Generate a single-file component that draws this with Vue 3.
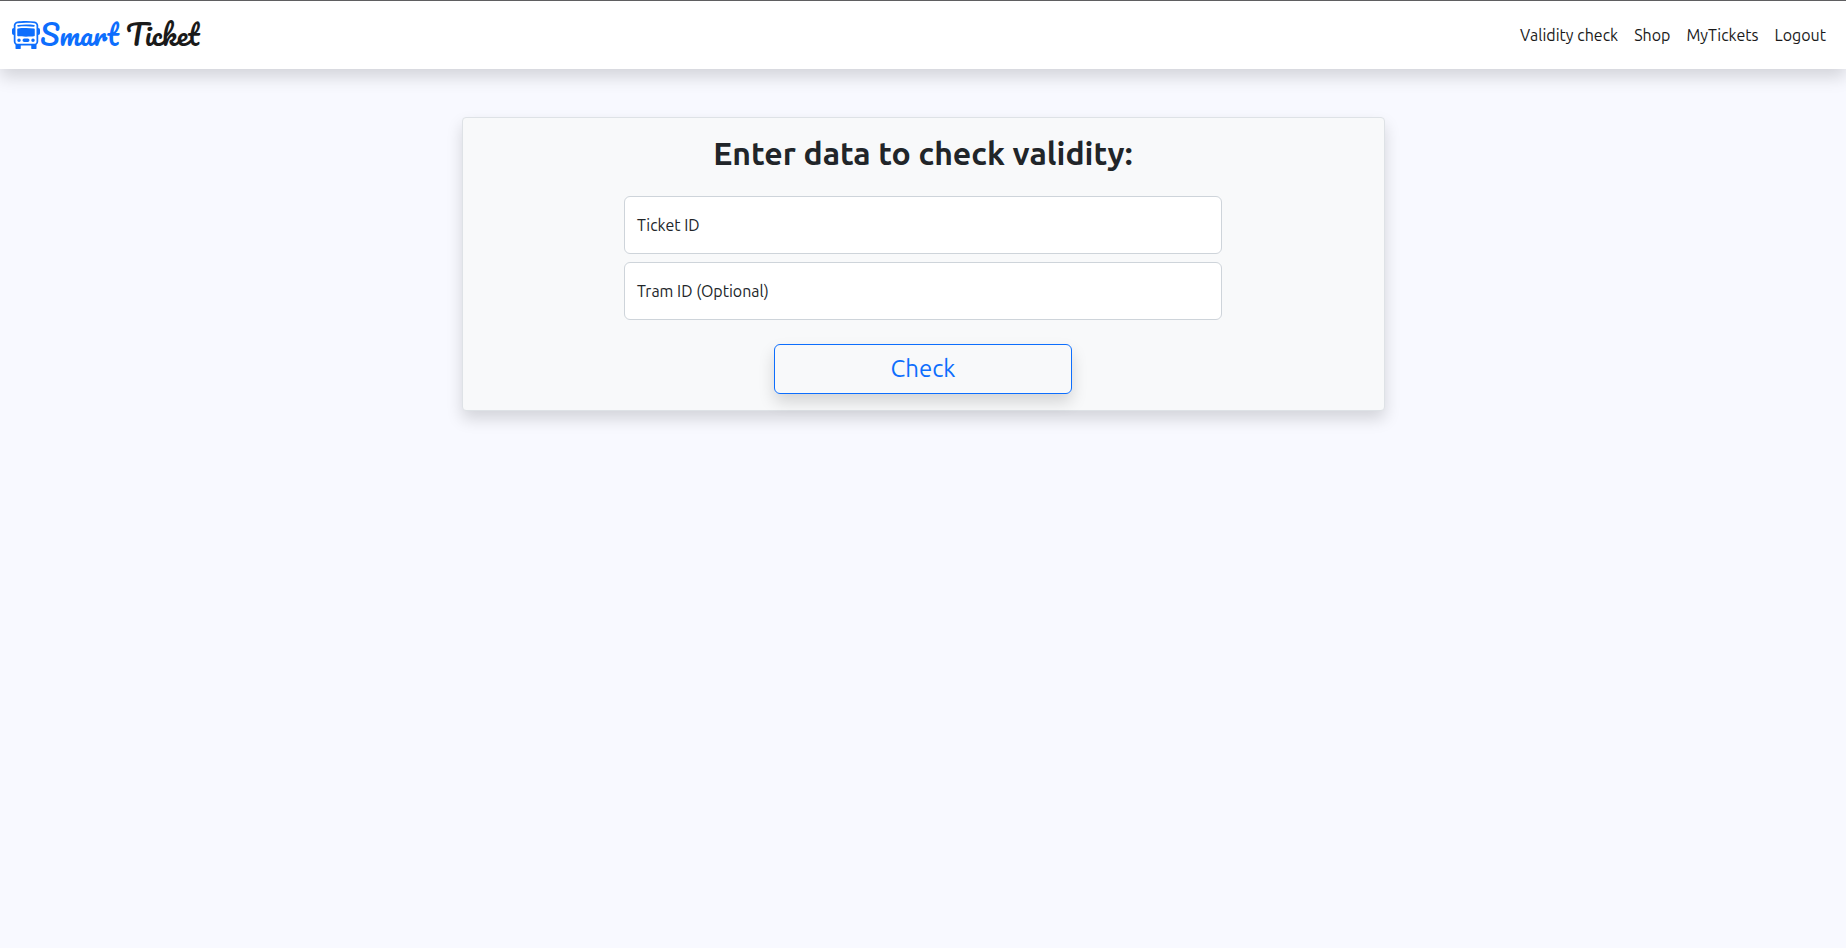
<script setup>
import { ref } from 'vue'

const links = ['Validity check', 'Shop', 'MyTickets', 'Logout']
const ticketId = ref('')
const tramId = ref('')
</script>

<template>
  <header class="navbar">
    <a class="brand" href="#">
      <svg class="brand-icon" viewBox="0 0 16 16" fill="currentColor" aria-hidden="true">
        <path d="M5 11a1 1 0 1 1-2 0 1 1 0 0 1 2 0m8 0a1 1 0 1 1-2 0 1 1 0 0 1 2 0m-6-1a1 1 0 1 0 0 2h2a1 1 0 1 0 0-2zm1-6c-1.876 0-3.426.109-4.552.226A.5.5 0 0 0 3 4.723v3.554a.5.5 0 0 0 .448.497C4.574 8.891 6.124 9 8 9s3.426-.109 4.552-.226A.5.5 0 0 0 13 8.277V4.723a.5.5 0 0 0-.448-.497A44 44 0 0 0 8 4m0-1c-1.837 0-3.353.107-4.448.22a.5.5 0 1 1-.104-.994A44 44 0 0 1 8 2c1.876 0 3.426.109 4.552.226a.5.5 0 1 1-.104.994A43 43 0 0 0 8 3" />
        <path d="M15 8a1 1 0 0 0 1-1V5a1 1 0 0 0-1-1V2.64c0-1.188-.845-2.232-2.064-2.372A44 44 0 0 0 8 0C5.9 0 4.208.136 3.064.268 1.845.408 1 1.452 1 2.64V4a1 1 0 0 0-1 1v2a1 1 0 0 0 1 1v3.5c0 .818.393 1.544 1 2v2a.5.5 0 0 0 .5.5h2a.5.5 0 0 0 .5-.5V14h6v1.5a.5.5 0 0 0 .5.5h2a.5.5 0 0 0 .5-.5v-2c.607-.456 1-1.182 1-2zM8 1c2.056 0 3.71.134 4.822.261.676.078 1.178.66 1.178 1.379v8.86a1.5 1.5 0 0 1-1.5 1.5h-9A1.5 1.5 0 0 1 2 11.5V2.64c0-.72.502-1.301 1.178-1.379A43 43 0 0 1 8 1" />
      </svg>
      <span class="brand-text"><span class="accent">Smart</span> Ticket</span>
    </a>
    <nav class="links">
      <a v-for="link in links" :key="link" href="#">{{ link }}</a>
    </nav>
  </header>

  <main class="page">
    <form class="card" @submit.prevent>
      <h2>Enter data to check validity:</h2>
      <div class="fields">
        <div class="field">
          <input id="ticket-id" v-model="ticketId" type="text" placeholder=" " />
          <label for="ticket-id">Ticket ID</label>
        </div>
        <div class="field">
          <input id="tram-id" v-model="tramId" type="text" placeholder=" " />
          <label for="tram-id">Tram ID (Optional)</label>
        </div>
      </div>
      <button type="submit">Check</button>
    </form>
  </main>
</template>

<style>
body {
  background: #f8f9ff;
  color: #212529;
  font-family: Ubuntu, "Noto Sans", "Open Sans", sans-serif;
  font-size: 16px;
  line-height: 24px;
}
</style>

<style scoped>
* {
  box-sizing: border-box;
}

.navbar {
  display: flex;
  align-items: center;
  justify-content: space-between;
  padding: 8px 12px;
  background: #fff;
  border-top: 1px solid #5f5f61;
  box-shadow: 0 8px 16px rgba(0, 0, 0, 0.15);
}

.brand {
  display: flex;
  align-items: center;
  color: #1a1a1a;
  text-decoration: none;
}

.brand-icon {
  width: 28px;
  height: 28px;
  color: #0d6efd;
}

.brand-text {
  font-family: Pacifico, Lato, sans-serif;
  font-size: 28px;
  font-weight: 400;
  line-height: 52px;
}

.accent {
  color: #0d6efd;
}

.links {
  display: flex;
}

.links a {
  padding: 8px;
  color: #1a1a1a;
  text-decoration: none;
}

.page {
  padding: 48px 0;
}

.card {
  display: flex;
  flex-direction: column;
  align-items: center;
  gap: 24px;
  width: 50%;
  margin: 0 auto;
  padding: 16px 12px;
  background: #f8f9fa;
  border: 1px solid #dee2e6;
  border-radius: 4px;
  box-shadow: 0 8px 16px rgba(0, 0, 0, 0.15);
}

h2 {
  margin: 0;
  font-size: 32px;
  font-weight: 600;
  line-height: 38px;
}

.fields {
  display: grid;
  gap: 8px;
  width: 66.6667%;
}

.field {
  position: relative;
}

.field input {
  display: block;
  width: 100%;
  height: 58px;
  padding: 26px 12px 10px;
  color: inherit;
  font: inherit;
  background: #fff;
  border: 1px solid #ced4da;
  border-radius: 6px;
}

.field label {
  position: absolute;
  inset: 0 auto auto 0;
  padding: 17px 13px;
  pointer-events: none;
}

.field input:focus + label,
.field input:not(:placeholder-shown) + label {
  padding-top: 4px;
  font-size: 12px;
  opacity: 0.65;
}

button {
  width: 33.3333%;
  height: 50px;
  padding: 0;
  color: #0d6efd;
  font-family: inherit;
  font-size: 24px;
  line-height: 36px;
  background: transparent;
  border: 1px solid #0d6efd;
  border-radius: 6px;
  box-shadow: 0 8px 16px rgba(0, 0, 0, 0.15);
  cursor: pointer;
}
</style>
